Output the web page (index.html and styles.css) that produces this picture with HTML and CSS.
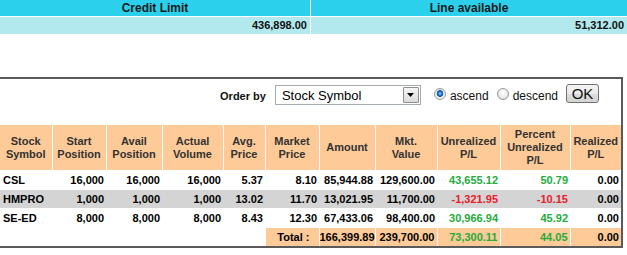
FILE: index.html
```html
<!DOCTYPE html>
<html>
<head>
<meta charset="utf-8">
<link rel="stylesheet" href="styles.css">
</head>
<body>
<div class="summary">
  <div class="sum-head">Credit Limit</div>
  <div class="sum-head">Line available</div>
  <div class="sum-val">436,898.00</div>
  <div class="sum-val">51,312.00</div>
</div>

<div class="panel">
  <div class="order-bar">
    <span class="order-label">Order by</span>
    <div class="select">
      <span class="select-text">Stock Symbol</span>
      <span class="select-btn"><svg width="7" height="4" viewBox="0 0 7 4"><path d="M0 0H7L3.5 4Z" fill="#000"/></svg></span>
    </div>
    <input class="radio radio-first" type="radio" name="ord" checked>
    <span class="radio-label">ascend</span>
    <input class="radio" type="radio" name="ord">
    <span class="radio-label">descend</span>
    <button class="ok-btn">OK</button>
  </div>

  <table class="port">
    <colgroup>
      <col class="c52"><col class="c54"><col class="c56"><col class="c61"><col class="c42"><col class="c54"><col class="c56"><col class="c62"><col class="c63"><col class="c70"><col class="c51">
    </colgroup>
    <thead>
      <tr>
        <th>Stock<br>Symbol</th>
        <th>Start<br>Position</th>
        <th>Avail<br>Position</th>
        <th>Actual<br>Volume</th>
        <th>Avg.<br>Price</th>
        <th>Market<br>Price</th>
        <th>Amount</th>
        <th>Mkt.<br>Value</th>
        <th>Unrealized<br>P/L</th>
        <th>Percent<br>Unrealized<br>P/L</th>
        <th>Realized<br>P/L</th>
      </tr>
    </thead>
    <tbody>
      <tr>
        <td class="sym">CSL</td><td>16,000</td><td>16,000</td><td>16,000</td><td>5.37</td><td>8.10</td><td>85,944.88</td><td>129,600.00</td><td class="pos">43,655.12</td><td class="pos">50.79</td><td>0.00</td>
      </tr>
      <tr class="alt">
        <td class="sym">HMPRO</td><td>1,000</td><td>1,000</td><td>1,000</td><td>13.02</td><td>11.70</td><td>13,021.95</td><td>11,700.00</td><td class="neg">-1,321.95</td><td class="neg">-10.15</td><td>0.00</td>
      </tr>
      <tr>
        <td class="sym">SE-ED</td><td>8,000</td><td>8,000</td><td>8,000</td><td>8.43</td><td>12.30</td><td>67,433.06</td><td>98,400.00</td><td class="pos">30,966.94</td><td class="pos">45.92</td><td>0.00</td>
      </tr>
      <tr class="total">
        <td class="blank" colspan="5"></td><td class="tot tot-label">Total :</td><td class="tot">166,399.89</td><td class="tot">239,700.00</td><td class="tot pos">73,300.11</td><td class="tot pos">44.05</td><td class="tot">0.00</td>
      </tr>
    </tbody>
  </table>
</div>
</body>
</html>
```

FILE: styles.css
```css
body {
  margin: 0;
  font-family: "Liberation Sans", Arial, sans-serif;
  color: #000;
  background: #fff;
}

.summary {
  display: grid;
  grid-template-columns: 310px 1fr;
  gap: 1px;
  width: 627px;
}

.sum-head {
  height: 16px;
  line-height: 16px;
  background: #2bd0ec;
  text-align: center;
  font-size: 12px;
  font-weight: bold;
  color: #1a1a1a;
}

.sum-val {
  height: 17px;
  line-height: 17px;
  background: #b2e9ef;
  text-align: right;
  padding-right: 3px;
  font-size: 11px;
  font-weight: bold;
  color: #111;
}

.panel {
  margin-top: 43px;
  width: 621px;
  border-top: 2px solid #5a5a5a;
  border-right: 2px solid #5a5a5a;
  border-bottom: 2px solid #5a5a5a;
}

.order-bar {
  display: flex;
  align-items: center;
  justify-content: flex-end;
  height: 20px;
  padding: 6px 22px 20px 0;
}

.order-label {
  font-size: 11px;
  font-weight: bold;
  color: #111;
  margin-right: 9px;
  margin-top: 2px;
}

.select {
  display: flex;
  align-items: center;
  box-sizing: border-box;
  width: 146px;
  height: 20px;
  border: 1px solid #a5acb2;
  background: #fff;
}

.select-text {
  flex: 1;
  font-size: 13px;
  padding-left: 6px;
  color: #000;
}

.select-btn {
  display: flex;
  align-items: center;
  justify-content: center;
  box-sizing: border-box;
  width: 16px;
  height: 16px;
  margin-right: 1px;
  border: 1px solid #8e8f8f;
  border-radius: 1px;
  background: linear-gradient(#f6f6f6, #dadada);
}

.radio {
  appearance: none;
  -webkit-appearance: none;
  box-sizing: border-box;
  width: 12px;
  height: 12px;
  margin: -2px 4px 0 8px;
  border: 1px solid #9a9a9a;
  border-radius: 50%;
  background: radial-gradient(circle at 50% 40%, #ffffff 0, #f0f0f0 45%, #d2d2d2 100%);
}

.radio-first {
  margin-left: 13px;
}

.radio:checked {
  background: radial-gradient(circle at 50% 45%, #8fd3ff 0, #2c86d6 1.6px, #0d4aa0 3px, #e6e6e6 3.6px, #f6f6f6 5px);
}

.radio-label {
  font-size: 12px;
  color: #111;
  margin-top: 1px;
}

.ok-btn {
  box-sizing: border-box;
  width: 33px;
  height: 19px;
  margin-left: 8px;
  margin-top: -3px;
  padding: 0;
  border: 1px solid #707070;
  border-radius: 3px;
  background: linear-gradient(#f4f4f4 0, #ebebeb 50%, #dcdcdc 51%, #d4d4d4 100%);
  font-family: "Liberation Sans", Arial, sans-serif;
  font-size: 15px;
  line-height: 17px;
  color: #111;
}

.port {
  table-layout: fixed;
  width: 621px;
  border-collapse: collapse;
  font-size: 11px;
  font-weight: bold;
}

.c42 { width: 42px; }
.c51 { width: 51px; }
.c52 { width: 52px; }
.c54 { width: 54px; }
.c56 { width: 56px; }
.c61 { width: 61px; }
.c62 { width: 62px; }
.c63 { width: 63px; }
.c70 { width: 70px; }

.port th {
  height: 45px;
  padding: 0;
  background: #fdca98;
  color: #333;
  font-weight: bold;
  line-height: 13px;
  text-align: center;
  vertical-align: middle;
  border-left: 1px solid #fff;
  border-bottom: 1px solid #fff;
}

.port th:first-child {
  border-left: none;
}

.port td {
  height: 18px;
  padding: 0 2px 0 0;
  text-align: right;
  vertical-align: middle;
  border-top: 1px solid #fff;
  white-space: nowrap;
}

.port td.sym {
  text-align: left;
  padding-left: 3px;
}

.port tr.alt td {
  background: #d4d4d4;
}

.port td.tot {
  background: #fdca98;
  border-left: 1px solid #fff;
}

.port td.tot-label {
  padding-right: 9px;
}

.port td.blank {
  background: #fff;
}

.pos {
  color: #22ad3c;
}

.neg {
  color: #e8202a;
}
```
